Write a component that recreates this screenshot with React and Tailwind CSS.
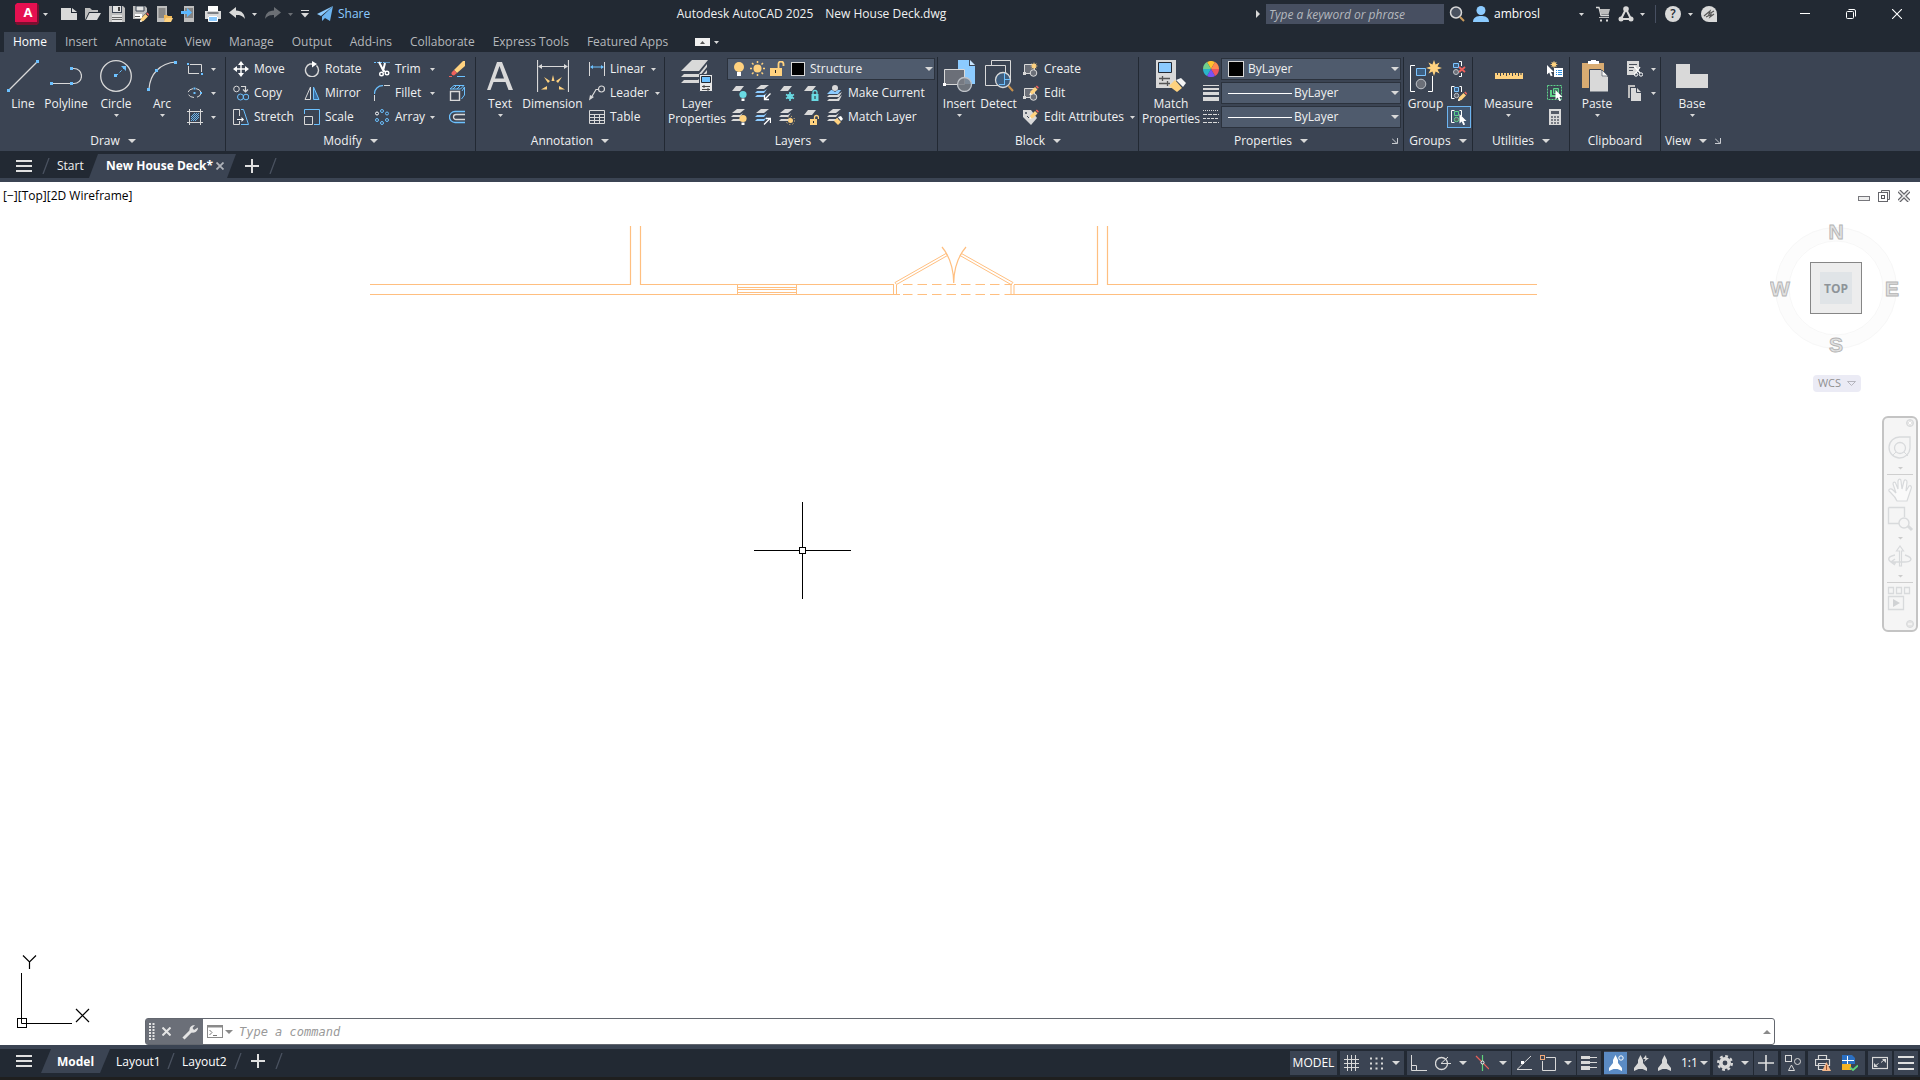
import clsx from "clsx";

function Icon({ w = 16, h = 16, children }) {
  return (
    <svg width={w} height={h} viewBox={`0 0 ${w} ${h}`} fill="none" className="shrink-0" aria-hidden="true">
      {children}
    </svg>
  );
}

function Caret({ big, className }) {
  return big ? (
    <svg width="8" height="4" viewBox="0 0 8 4" className={clsx("shrink-0", className)} aria-hidden="true">
      <path d="M0 0H8L4 4Z" fill="#d9d9d9" />
    </svg>
  ) : (
    <svg width="5" height="3" viewBox="0 0 5 3" className={clsx("shrink-0", className)} aria-hidden="true">
      <path d="M0 0H5L2.5 3Z" fill="#d9d9d9" />
    </svg>
  );
}

/* ---------- shared icon parts ---------- */

const Sheet = ({ y = 0, fill = "#d9d9d9" }) => <path d={`M5 ${y}H13L9 ${y + 5}H1Z`} fill={fill} />;

const Layers3 = ({ mid = "#d9d9d9" }) => (
  <>
    <path d="M6 0H14L9 4H1Z" fill="#d9d9d9" />
    <path d="M2 6H9L12 4L9 8H0Z" fill={mid} />
    <path d="M2 10H9L12 8L9 12H0Z" fill={mid} />
  </>
);

const Bulb = ({ fill }) => (
  <>
    <circle cx="12" cy="9.5" r="3.6" fill={fill} />
    <path d="M10.5 13.5h3V16h-3Z" fill="#fff" />
  </>
);

const Cursor = ({ x, y }) => (
  <path transform={`translate(${x} ${y})`} d="M0 0V9.5L2.2 7.6L3.8 11.2L5.6 10.4L4 7H7Z" fill="#fff" />
);

const Pencil = ({ x, y }) => (
  <g transform={`translate(${x} ${y})`}>
    <path d="M0 9L1 5.5L5.5 1L8 3.5L3.5 8Z" fill="#ffd27f" />
    <path d="M6.2 .6L7.4 -.4L9.4 1.6L8.4 2.8Z" fill="#f0625c" />
    <path d="M0 9L.6 6.8L2.2 8.4Z" fill="#fff" />
  </g>
);

const Star = ({ x, y, r = 1 }) => (
  <path
    transform={`translate(${x} ${y}) scale(${r})`}
    d="M0 -5L1 -2.2L3.5 -3.5L2.2 -1L5 0L2.2 1L3.5 3.5L1 2.2L0 5L-1 2.2L-3.5 3.5L-2.2 1L-5 0L-2.2 -1L-3.5 -3.5L-1 -2.2Z"
    fill="#ffd27f"
  />
);

const Blocks = () => (
  <>
    <path d="M1.5 12.5V3.5H11.5V12.5Z" fill="#6b6f78" stroke="#d9d9d9" />
    <circle cx="10.5" cy="12" r="3.3" fill="#6b6f78" stroke="#d9d9d9" />
    <path d="M0 11H3V14H0Z" fill="#d9d9d9" />
  </>
);

const Bracketed = ({ color = "#7cc4ff", circle = "#bfc3c9" }) => (
  <>
    <path d="M3.5 1.5H.5V13.5H3.5" stroke="#fff" />
    <path d="M3.5 2.5H7.5V6.5H3.5Z" fill="#3d5f82" stroke={color} />
    <circle cx="5.5" cy="10.5" r="2.2" fill="#5c616b" stroke={circle} />
    <path d="M8.5 1.5H10.5V7" stroke="#fff" />
  </>
);

/* ---------- quick access icons ---------- */

const quickAccess = [
  { name: "New", art: <><path d="M0 2H10V7H16V14H0Z" fill="#d9d9d9" /><path d="M11 2L16 6H11Z" fill="#d9d9d9" /></> },
  { name: "Open", art: <><path d="M0 14V2H5L7 4H13V6H4Z" fill="#bdbdbd" /><path d="M4.5 7H16L12 14H1Z" fill="#d9d9d9" /></> },
  { name: "Save", art: <><path d="M0 0H14L16 2V16H0Z" fill="#bdbdbd" /><path d="M3 0H13V7H3Z" fill="#3b4453" /><path d="M4 0H12V6H4Z" fill="#e4e4e4" /><path d="M9 1H11V5H9Z" fill="#444" /><path d="M3 9H13V16H3Z" fill="#e4e4e4" /><path d="M3 11.5H13M3 13.5H13" stroke="#666" /></> },
  { name: "Save As", art: <><path d="M0 0H12L14 2V6L8 12V13H0Z" fill="#bdbdbd" /><path d="M3 0H11V5H3Z" fill="#e4e4e4" stroke="#3b4453" /><path d="M2 8H9V12H2Z" fill="#fff" /><path d="M2 10.5H7" stroke="#555" /><Pencil x={7} y={7} /></> },
  { name: "Open from Web & Mobile", art: <><path d="M0 0H10V16H0Z" fill="#bdbdbd" /><path d="M1.5 2H8.5V12H1.5Z" fill="#888" /><path d="M7 15V9H10L11 10H15V12H9Z" fill="#f0b95a" /><path d="M9 12H16L14 16H7Z" fill="#ffd27f" /></> },
  { name: "Save to Web & Mobile", art: <><path d="M3 0H13V16H3Z" fill="#bdbdbd" /><path d="M4 2H12V12H4Z" fill="#858585" /><path d="M0 5H6V2L11 6.5L6 11V8H0Z" fill="#5cb8ff" /></> },
  { name: "Plot", art: <><path d="M3 0H13V5H3Z" fill="#fff" /><path d="M0 5H16V13H13V10H3V13H0Z" fill="#d9d9d9" /><path d="M2.5 7H13.5" stroke="#222933" /><path d="M3.5 10.5H12.5V15.5H3.5Z" fill="#8ccbff" stroke="#fff" /></> },
];

/* ---------- ribbon building blocks ---------- */

function Panel({ title, menu = true, launcher, className, children }) {
  return (
    <section className={clsx("flex h-[98px] shrink-0 flex-col border-r border-[#222933]", className)}>
      <div className="flex h-[73px]">{children}</div>
      <div className="relative flex h-[22px] items-center justify-center gap-2">
        <span>{title}</span>
        {menu && <Caret big />}
        {launcher && (
          <button className={clsx(launcher === "corner" && "absolute right-px p-1")} aria-label={`${title} settings`}>
            <Icon w={6} h={6}><path d="M0 .5L4.5 5M5.5 0V5.5H0" stroke="#c9ccd1" /></Icon>
          </button>
        )}
      </div>
    </section>
  );
}

function BigButton({ label, caret, className, children }) {
  return (
    <button className={clsx("flex shrink-0 flex-col items-center pt-[3px] leading-[15px] whitespace-nowrap", className)}>
      {children}
      <span className="mt-1 whitespace-pre text-center">{label}</span>
      {caret && <Caret className="mt-[3px]" />}
    </button>
  );
}

function SmallButton({ label, name, caret, className, children }) {
  return (
    <button aria-label={label || name} className={clsx("flex h-6 items-center gap-[5px] whitespace-nowrap", className)}>
      {children}
      {label && <span>{label}</span>}
      {caret && <Caret className={label ? "ml-px" : "ml-[3px]"} />}
    </button>
  );
}

function Combo({ label, value, className, children }) {
  return (
    <div className={clsx("flex h-[22px] items-center border border-[#2b323d] bg-[#4f5b6d] pr-px", className)}>
      {children}
      <select aria-label={label} className="min-w-0 flex-1 appearance-none bg-transparent outline-none">
        <option>{value}</option>
      </select>
      <Caret big />
    </div>
  );
}

/* ---------- ribbon panels ---------- */

function DrawPanel() {
  return (
    <Panel title="Draw" className="w-[225px]">
      <BigButton label="Line" className="w-11">
        <Icon w={32} h={32}><path d="M2 30L30 2" stroke="#d9d9d9" strokeWidth="1.2" /><path d="M0 29h3v3H0zM29 0h3v3h-3z" fill="#6cc1ff" /></Icon>
      </BigButton>
      <BigButton label="Polyline" className="w-[42px]">
        <Icon w={32} h={32}><path d="M2 23.500H21M22 8.500h2a7.500 7.500 0 0 1 0 15h-2" stroke="#d9d9d9" strokeWidth="1.2" /><path d="M0 22h3v3H0zM20 22h3v3h-3zM20 7h3v3h-3z" fill="#6cc1ff" /></Icon>
      </BigButton>
      <BigButton label="Circle" caret className="w-[58px]">
        <Icon w={32} h={32}><circle cx="16" cy="16" r="15.300" stroke="#d9d9d9" strokeWidth="1.300" /><path d="M16 16L24 8" stroke="#6cc1ff" strokeDasharray="3 2" /><path d="M26 6V11L21 6ZM14 14h3v3h-3z" fill="#6cc1ff" /></Icon>
      </BigButton>
      <BigButton label="Arc" caret className="w-[34px]">
        <Icon w={32} h={32}><path d="M3 29C4 14 14 3 30 2" stroke="#d9d9d9" strokeWidth="1.200" /><path d="M1 28h3v3H1zM9 9h3v3H9zM28 1h3v3h-3z" fill="#6cc1ff" /></Icon>
      </BigButton>
      <div className="pl-2">
        <SmallButton name="Rectangle" caret>
          <Icon><path d="M3 3.500H14.500V11M1.500 5V12.500H12" stroke="#d9d9d9" /><path d="M0 2h2v2H0zM14 12h2v2h-2z" fill="#6cc1ff" /></Icon>
        </SmallButton>
        <SmallButton name="Ellipse" caret>
          <Icon><ellipse cx="7.500" cy="8" rx="6.500" ry="4.500" stroke="#d9d9d9" strokeDasharray="6 3" /><path d="M6.500 2.500h2v2h-2zM6.500 7h2v2h-2zM13 7h2v2h-2z" fill="#6cc1ff" /></Icon>
        </SmallButton>
        <SmallButton name="Hatch" caret>
          <Icon><path d="M0 2.500H16M0 13.500H16M2.500 0V16M13.500 0V16" stroke="#d9d9d9" /><path d="M4 8L8 4M4 12L12 4M8 12L12 8M4 10L10 4M6 12L12 6" stroke="#6cc1ff" strokeWidth=".900" /></Icon>
        </SmallButton>
      </div>
    </Panel>
  );
}

function ModifyPanel() {
  return (
    <Panel title="Modify" className="w-[250px]">
      <div className="grid grid-cols-[71px_70px_75px_16px] grid-rows-[24px_24px_24px] pl-[7px]">
        <SmallButton label="Move">
          <Icon><path d="M8 2V14M2 8H14" stroke="#fff" strokeWidth="1.400" /><path d="M8 0L11 4H5ZM8 16L5 12H11ZM0 8L4 5V11ZM16 8L12 11V5Z" fill="#fff" /></Icon>
        </SmallButton>
        <SmallButton label="Rotate">
          <Icon><path d="M12.500 4.500A6.500 6.500 0 1 1 6 3H9" stroke="#d9d9d9" strokeWidth="1.400" /><path d="M8 0L13 3L8 6.500Z" fill="#fff" /></Icon>
        </SmallButton>
        <SmallButton label="Trim" caret className="pr-[14px] [&>svg:last-child]:ml-auto">
          <Icon><path d="M0 1.500H10" stroke="#6cc1ff" strokeDasharray="2 1" /><path d="M10 1.500H16" stroke="#6cc1ff" strokeOpacity=".6" /><path d="M5 1L10 11M11 2L9 10" stroke="#fff" strokeWidth="2" /><circle cx="7.500" cy="13" r="1.800" stroke="#fff" strokeWidth="1.400" /><circle cx="13" cy="12" r="1.800" stroke="#fff" strokeWidth="1.400" /><path d="M9 9L12 11" stroke="#fff" strokeWidth="1.500" /></Icon>
        </SmallButton>
        <SmallButton name="Erase">
          <Icon><path d="M14 0H16V5L8 12L5 9Z" fill="#ffd27f" /><path d="M5 9L8 12L5 14.500C2 14 2 12 3 11Z" fill="#f0625c" /><path d="M0 15.500H3" stroke="#f0625c" /><path d="M8 15.500H16" stroke="#6cc1ff" /></Icon>
        </SmallButton>
        <SmallButton label="Copy">
          <Icon><circle cx="3.500" cy="4" r="2.800" stroke="#d9d9d9" /><path d="M8 1.500H12.500V6M10 4.500L12.500 7L15 4.500" stroke="#d9d9d9" strokeWidth="1.200" /><circle cx="7.500" cy="12" r="3" stroke="#6cc1ff" /><circle cx="13" cy="12" r="2.800" stroke="#6cc1ff" /></Icon>
        </SmallButton>
        <SmallButton label="Mirror">
          <Icon><path d="M6.500 2V14.500H1Z" stroke="#d9d9d9" /><path d="M9.500 2V14.500H15Z" fill="#3b6da0" stroke="#6cc1ff" /></Icon>
        </SmallButton>
        <SmallButton label="Fillet" caret className="pr-[14px] [&>svg:last-child]:ml-auto">
          <Icon><path d="M.500 9A8 8 0 0 1 9 .700" stroke="#6cc1ff" strokeWidth="1.200" /><path d="M10 .500H16M.500 10V16" stroke="#d9d9d9" /></Icon>
        </SmallButton>
        <SmallButton name="Explode">
          <Icon><path d="M1.500 6.500H10.500V15.500H1.500Z" stroke="#d9d9d9" strokeWidth="1.400" /><path d="M1 4L5 .500H15L11.500 4H1M13 6L15.500 2V10L12.500 14" stroke="#6cc1ff" /><path d="M4 4L7 1M8 4L11 1" stroke="#6cc1ff" /></Icon>
        </SmallButton>
        <SmallButton label="Stretch">
          <Icon><path d="M6.500 7V.500H.500V15.500H6.500V12" stroke="#d9d9d9" /><path d="M4 10.500H10" stroke="#fff" /><path d="M8.500 8L11 10.500L8.500 13Z" fill="#fff" /><path d="M8 .500H10.500L15.500 15.500H8" stroke="#6cc1ff" /></Icon>
        </SmallButton>
        <SmallButton label="Scale">
          <Icon><path d="M.500 5V.500H15.500V15.500H10" stroke="#6cc1ff" /><path d="M.500 7.500H8.500V15.500H.500Z" stroke="#d9d9d9" /></Icon>
        </SmallButton>
        <SmallButton label="Array" caret className="pr-[14px] [&>svg:last-child]:ml-auto">
          <Icon><g stroke="#6cc1ff"><circle cx="8" cy="2" r="1.500" /><circle cx="13" cy="4.500" r="1.500" /><circle cx="13" cy="11" r="1.500" /><circle cx="8" cy="14" r="1.500" /><circle cx="3" cy="11" r="1.500" /></g><circle cx="3" cy="4.500" r="1.500" stroke="#fff" /></Icon>
        </SmallButton>
        <SmallButton name="Offset">
          <Icon><path d="M16 2.500H6A5.500 5.500 0 0 0 6 13.500H16" stroke="#6cc1ff" strokeWidth="1.300" /><path d="M16 5.500H7A2.500 2.500 0 0 0 7 10.500H16" stroke="#d9d9d9" strokeWidth="1.300" /></Icon>
        </SmallButton>
      </div>
    </Panel>
  );
}

function AnnotationPanel() {
  return (
    <Panel title="Annotation" className="w-[189px]">
      <BigButton label="Text" caret className="w-12">
        <Icon w={32} h={32}><path d="M13 2H18L29 30H24.500L21.500 22H9.500L6.500 30H3L13 2ZM15.500 6L11 18.500H20Z" fill="#d9d9d9" /></Icon>
      </BigButton>
      <BigButton label="Dimension" className="w-[57px]">
        <Icon w={32} h={32}><path d="M.500 0V32M31.500 0V32M3 6.500H29" stroke="#d9d9d9" strokeWidth="1.200" /><path d="M1 6.500L5 4V9ZM31 6.500L27 4V9Z" fill="#d9d9d9" /><path d="M14.500 21L16 15L17.500 21ZM7 17L13 21L11 23ZM25 17L19 21L21 23ZM4 29.500L10 26V29.500ZM28 29.500L22 26V29.500Z" fill="#ffd27f" /></Icon>
      </BigButton>
      <div className="pl-2">
        <SmallButton label="Linear" caret>
          <Icon><path d="M.500 1V15M15.500 1V15" stroke="#d9d9d9" /><path d="M2 6H14" stroke="#6cc1ff" /><path d="M1 6L4 4V8ZM15 6L12 4V8Z" fill="#6cc1ff" /></Icon>
        </SmallButton>
        <SmallButton label="Leader" caret>
          <Icon><circle cx="12.500" cy="4" r="3" stroke="#d9d9d9" strokeWidth="1.200" /><path d="M9 4.500H7L2 13" stroke="#d9d9d9" strokeWidth="1.200" /><path d="M0 15.500L1 10L5 12Z" fill="#d9d9d9" /></Icon>
        </SmallButton>
        <SmallButton label="Table">
          <Icon><path d="M.500 1.500H15.500V14.500H.500ZM.500 5.500H15.500M.500 8.500H15.500M.500 11.500H15.500M5.500 5V15M10.500 5V15" stroke="#d9d9d9" /></Icon>
        </SmallButton>
      </div>
    </Panel>
  );
}

const layerTools = [
  { name: "Layer off", art: <><Sheet y={1} /><Bulb fill="#6adbe4" /></> },
  { name: "Isolate", art: <><Layers3 mid="#8ccbff" /><path d="M15.500 8.500L10 14M9.500 10V14.500H14" stroke="#fff" strokeWidth="1.300" /></> },
  { name: "Freeze", art: <><Sheet y={1} /><path d="M11 7V16M7 9.500L15 13.500M15 9.500L7 13.500" stroke="#6adbe4" strokeWidth="1.600" /><circle cx="11" cy="11.500" r="2.500" stroke="#6adbe4" /></> },
  { name: "Lock", art: <><Sheet y={1} /><path d="M8.500 9H15.500V16H8.500Z" fill="#6adbe4" /><path d="M10 9V7.500a2 2 0 0 1 4 0V9" stroke="#6adbe4" strokeWidth="1.300" /><path d="M12 11V14" stroke="#222933" /></> },
  { name: "Turn all layers on", art: <><Layers3 /><Bulb fill="#ffd27f" /></> },
  { name: "Unisolate", art: <><Layers3 mid="#8ccbff" /><path d="M9 15.500L15 9.500M11 9.500H15.500V14" stroke="#fff" strokeWidth="1.300" /></> },
  { name: "Thaw all layers", art: <><Layers3 /><circle cx="11.500" cy="11.500" r="2.500" fill="#ffd27f" /><circle cx="11.500" cy="11.500" r="4.200" stroke="#ffd27f" strokeDasharray="1 2.300" /></> },
  { name: "Unlock", art: <><Sheet y={1} /><path d="M7 10H14V16H7Z" fill="#ffd27f" /><path d="M11.500 10V8.500a2 2 0 0 1 4 0V10" stroke="#ffd27f" strokeWidth="1.300" /><path d="M10.500 12V14" stroke="#222933" /></> },
];

function LayersPanel() {
  return (
    <Panel title="Layers" className="w-[273px]">
      <BigButton label={"Layer\nProperties"} className="w-[62px] pl-[2px]">
        <Icon w={32} h={32}>
          <path d="M11 0H27L18 11H0Z" fill="#d9d9d9" />
          <path d="M3 14H18L26 4V7L18 17H0ZM3 20H17L26 10V13L18 23H0Z" fill="#d9d9d9" />
          <path d="M18.500 14.500H31.500V31.500H18.500Z" fill="#e8e8e8" stroke="#3b4453" />
          <path d="M20.500 16.500H29.500V22.500H20.500Z" fill="#6cc1ff" stroke="#222933" />
          <path d="M21 26.500H29M21 29.500H29M23 25V28M27 28V31" stroke="#444" />
        </Icon>
      </BigButton>
      <div className="flex flex-col">
        <Combo label="Layer" value="Structure" className="mt-px w-[208px] pl-[5px]">
          <div className="flex w-[63px] shrink-0 items-center justify-between">
            <Icon w={53} h={16}>
              <circle cx="6" cy="6" r="5" fill="#ffd27f" /><path d="M4 11H8V15H4Z" fill="#fff" />
              <circle cx="24.500" cy="7.500" r="4" fill="#ffd27f" />
              <path d="M24.500 0V2M24.500 13V15M17 7.500H19M30 7.500H32M19 2L20.500 3.500M30 2L28.500 3.500M19 13L20.500 11.500M30 13L28.500 11.500" stroke="#ffd27f" strokeWidth="1.500" />
              <path d="M37 7H49V15H37Z" fill="#ffd27f" /><path d="M45.500 7V3a2.500 2.500 0 0 1 5 0V5" stroke="#ffd27f" strokeWidth="1.800" /><path d="M42.500 9V12" stroke="#222" />
            </Icon>
          </div>
          <span className="-ml-[5px] mr-[5px] h-[14px] w-[14px] shrink-0 border border-[#d9d9d9] bg-black" />
        </Combo>
        <div className="flex pl-1 pt-px">
          <div className="grid grid-cols-4 grid-rows-[24px_24px] gap-x-2">
            {layerTools.map((t) => (
              <SmallButton key={t.name} name={t.name}><Icon>{t.art}</Icon></SmallButton>
            ))}
          </div>
          <div className="pl-2">
            <SmallButton label="Make Current">
              <Icon><circle cx="8" cy="3" r="3" fill="#d9d9d9" /><path d="M4 5H5L8 7L11 5H14L11 9H0Z" fill="#8ccbff" /><path d="M2 10H10L15 7L12 12H0ZM2 14H10L15 10L12 16H0Z" fill="#d9d9d9" /></Icon>
            </SmallButton>
            <SmallButton label="Match Layer">
              <Icon><Layers3 /><path d="M7 12L10 9L14 13L11 16Z" fill="#ffd27f" /><path d="M11 8L14 7L16 10L14 12Z" fill="#fff" /></Icon>
            </SmallButton>
          </div>
        </div>
      </div>
    </Panel>
  );
}

function BlockPanel() {
  return (
    <Panel title="Block" className="w-[201px]">
      <BigButton label="Insert" caret className="w-[42px]">
        <Icon w={32} h={32}>
          <path d="M15 0H26V6H32V24H15Z" fill="#8ccbff" /><path d="M27 0L32 5H27Z" fill="#c9e6ff" />
          <path d="M1.500 9.500H21.500V24.500H1.500Z" fill="#6b6f78" stroke="#d9d9d9" />
          <circle cx="21.500" cy="24.500" r="7" fill="#787c84" fillOpacity=".85" stroke="#bfc3c9" strokeWidth="1.300" />
          <path d="M0 23H3V26H0Z" fill="#fff" />
        </Icon>
      </BigButton>
      <BigButton label="Detect" className="w-[37px]">
        <Icon w={32} h={32}>
          <path d="M8.500 5V.500H27.500V22M2.500 5.500H22.500V25.500H2.500Z" stroke="#d9d9d9" />
          <circle cx="20" cy="20" r="7.500" fill="#3e5d7e" stroke="#d9d9d9" strokeWidth="1.300" />
          <path d="M21.500 13V25M21.500 19.500H27M16 24.500H22" stroke="#6cc1ff" />
          <path d="M25.500 26L30 31" stroke="#c9914a" strokeWidth="2" />
        </Icon>
      </BigButton>
      <div className="pl-[6px]">
        <SmallButton label="Create"><Icon><Blocks /><Star x={11} y={5} r={0.8} /></Icon></SmallButton>
        <SmallButton label="Edit"><Icon><Blocks /><Pencil x={6.500} y={1} /></Icon></SmallButton>
        <SmallButton label="Edit Attributes" caret>
          <Icon><path d="M0 1H8L14 9L8 16L0 8Z" fill="#d9d9d9" /><circle cx="3" cy="4" r="1" fill="#3b4453" /><path d="M4 7L6 9" stroke="#3b4453" /><Pencil x={6.500} y={1} /></Icon>
        </SmallButton>
      </div>
    </Panel>
  );
}

const wheel = [
  ["M8 8L4 1.070A8 8 0 0 1 12 1.070Z", "#ffc22e"],
  ["M8 8L12 1.070A8 8 0 0 1 16 8Z", "#ff8a4f"],
  ["M8 8L16 8A8 8 0 0 1 12 14.930Z", "#f0555f"],
  ["M8 8L12 14.930A8 8 0 0 1 4 14.930Z", "#7a52f5"],
  ["M8 8L4 14.930A8 8 0 0 1 0 8Z", "#2ab5c9"],
  ["M8 8L0 8A8 8 0 0 1 4 1.070Z", "#6fd08c"],
];

function PropertiesPanel() {
  return (
    <Panel title="Properties" launcher="corner" className="w-[265px]">
      <BigButton label={"Match\nProperties"} className="w-[64px]">
        <Icon w={32} h={32}>
          <path d="M1 0H21V28H1Z" fill="#d9d9d9" /><path d="M3.500 2.500H16.500V12.500H3.500Z" fill="#8ccbff" stroke="#222933" />
          <path d="M4 18.500H15M4 23.500H15M7.500 16V21M12.500 21V26" stroke="#555" strokeWidth="1.300" />
          <path d="M14 26L20 20L27 28L22 32Z" fill="#ffd27f" /><path d="M21 20L26 18L31 23L28 27Z" fill="#f4f4f4" />
        </Icon>
      </BigButton>
      <div className="grid grid-cols-[18px_180px] grid-rows-[24px_24px_24px] items-center">
        <Icon>{wheel.map(([d, fill]) => <path key={fill} d={d} fill={fill} />)}</Icon>
        <Combo label="Object color" value="ByLayer" className="pl-[6px]">
          <span className="mr-1 h-4 w-4 border border-[#d9d9d9] bg-black" />
        </Combo>
        <Icon><path d="M0 0H16V1H0ZM0 3H16V5H0ZM0 7H16V10H0ZM0 12H16V16H0Z" fill="#d9d9d9" /></Icon>
        <Combo label="Lineweight" value="ByLayer" className="pl-[6px]">
          <span className="mr-[2px] h-px w-16 bg-white" />
        </Combo>
        <Icon><path d="M0 1.500H16" stroke="#d9d9d9" strokeDasharray="1 1" /><path d="M0 5.500H16M0 13.500H16" stroke="#d9d9d9" strokeDasharray="4 1" /><path d="M0 9.500H16" stroke="#d9d9d9" strokeDasharray="3 1" /></Icon>
        <Combo label="Linetype" value="ByLayer" className="pl-[6px]">
          <span className="mr-[2px] h-px w-16 bg-white" />
        </Combo>
      </div>
    </Panel>
  );
}

function GroupsPanel() {
  return (
    <Panel title="Groups" className="w-[69px]">
      <BigButton label="Group" className="w-[43px]">
        <Icon w={32} h={32}>
          <path d="M5 5.500H.500V31.500H5M18 31.500H22.500V16" stroke="#fff" />
          <path d="M6.500 8.500H15.500V15.500H6.500Z" fill="#3d5f82" stroke="#7cc4ff" /><circle cx="11" cy="24" r="4.800" fill="#6b6f78" stroke="#bfc3c9" />
          <Star x={24} y={8} r={1.6} />
        </Icon>
      </BigButton>
      <div>
        <SmallButton name="Ungroup" className="w-6 justify-center">
          <Icon><path d="M2.500 2.500H7.500V6.500H2.500Z" fill="#3d5f82" stroke="#7cc4ff" /><circle cx="5" cy="11" r="2.500" fill="#6b6f78" stroke="#bfc3c9" /><path d="M8 .500H10.500V5M10.500 12V15.500H8" stroke="#fff" /><path d="M8 6L14 11M14 6L8 11" stroke="#f0625c" strokeWidth="1.800" /></Icon>
        </SmallButton>
        <SmallButton name="Group edit" className="w-6 justify-center">
          <Icon><Bracketed /><Pencil x={7} y={7} /></Icon>
        </SmallButton>
        <button aria-label="Group selection" aria-pressed="true" className="mt-px flex h-[22px] w-6 items-center justify-center border border-[#6cb4f0] bg-[#42566f]">
          <Icon><Bracketed color="#5fd28a" circle="#5fd28a" /><Cursor x={8.500} y={5} /></Icon>
        </button>
      </div>
    </Panel>
  );
}

function UtilitiesPanel() {
  return (
    <Panel title="Utilities" className="w-[97px]">
      <BigButton label="Measure" caret className="w-[71px]">
        <Icon w={28} h={32}><path d="M0 13H28V19H0Z" fill="#ffd27f" /><path d="M2.500 13V15M5.500 13V16M8.500 13V15M11.500 13V16M14.500 13V15M17.500 13V16M20.500 13V15M23.500 13V16M26 13V15" stroke="#3b4453" /></Icon>
      </BigButton>
      <div className="pl-[3px]">
        <SmallButton name="Quick Select">
          <Icon><Cursor x={0} y={4} /><Star x={7} y={3.500} r={0.8} /><path d="M7 7H16V16H7Z" fill="#fff" /><path d="M9 9.500H10M11 9.500H15M9 11.500H10M11 11.500H15M9 13.500H10M11 13.500H15" stroke="#2c8ede" /></Icon>
        </SmallButton>
        <SmallButton name="Select All">
          <Icon><path d="M.500 .500H14.500V14.500H.500Z" stroke="#5fd28a" strokeDasharray="2 1" /><path d="M3 5H5V10H9V12H3Z" fill="#5fd28a" /><path d="M6.500 3.500H11.500V8.500H6.500Z" fill="#3c7a62" stroke="#5fd28a" /><Cursor x={8.500} y={5} /></Icon>
        </SmallButton>
        <SmallButton name="Quick Calculator">
          <Icon><path d="M2 0H14V16H2Z" fill="#d9d9d9" /><path d="M4 2H12V5H4Z" fill="#555b66" /><path d="M4 8H12M4 11H12M4 14H12" stroke="#555b66" strokeWidth="1.600" strokeDasharray="2 1" /></Icon>
        </SmallButton>
      </div>
    </Panel>
  );
}

function ClipboardPanel() {
  return (
    <Panel title="Clipboard" menu={false} className="w-[91px]">
      <BigButton label="Paste" caret className="w-[54px]">
        <Icon w={32} h={32}>
          <path d="M1 3H23V28H1Z" fill="#d9ac72" /><path d="M7 1H10V0H15V1H18V4H7Z" fill="#fff" />
          <path d="M8.500 9.500H20L27.500 17V32H8.500Z" fill="#d9d9d9" stroke="#3b4453" /><path d="M21 10L27 16H21Z" fill="#f6f6f6" stroke="#3b4453" strokeWidth=".600" />
        </Icon>
      </BigButton>
      <div className="pl-[3px]">
        <SmallButton name="Cut" caret>
          <Icon><path d="M0 0H12V7L8 14H0Z" fill="#d9d9d9" /><path d="M2 3.500H10M2 6.500H7M2 9.500H6" stroke="#4a505b" /><path d="M7 5L13 12M13 6L9 12" stroke="#fff" strokeWidth="1.300" /><circle cx="9" cy="13.500" r="1.700" stroke="#fff" /><circle cx="14" cy="13.500" r="1.700" stroke="#fff" /></Icon>
        </SmallButton>
        <SmallButton name="Copy clip" caret>
          <Icon><path d="M1 0H8V2H3V13H1Z" fill="#bdbdbd" /><path d="M4 3H10L14 7V16H4Z" fill="#d9d9d9" /><path d="M9.500 3V7.500H14" stroke="#3b4453" /></Icon>
        </SmallButton>
      </div>
    </Panel>
  );
}

function Ribbon() {
  return (
    <div className="flex h-[99px] overflow-hidden bg-[#3b4453] pl-px pt-[5px] text-[#f0f1f2]">
      <DrawPanel />
      <ModifyPanel />
      <AnnotationPanel />
      <LayersPanel />
      <BlockPanel />
      <PropertiesPanel />
      <GroupsPanel />
      <UtilitiesPanel />
      <ClipboardPanel />
      <Panel title="View" launcher="inline" className="w-[64px] border-r-0">
        <BigButton label="Base" caret className="w-[62px]">
          <Icon w={32} h={32}><path d="M0 4H14V14H32V28H0Z" fill="#d9d9d9" /></Icon>
        </BigButton>
      </Panel>
    </div>
  );
}

/* ---------- top bars ---------- */

function TitleBar() {
  return (
    <header className="flex h-7 items-center">
      <div className="flex h-full w-[367px] shrink-0 items-center pl-[15px]">
        <button aria-label="Application menu" className="flex items-center gap-1">
          <Icon w={24} h={22}>
            <path d="M2 0H22L24 2V20L22 22H2L0 20L3 17Z" fill="#7a1030" />
            <path d="M2 0H22V19H0V2Z" fill="#e51050" />
            <text x="13" y="14" textAnchor="middle" fontSize="13" fontWeight="700" fill="#fff" fontFamily="Open Sans, sans-serif">A</text>
          </Icon>
          <Caret />
        </button>
        <div className="ml-[13px] flex gap-2">
          {quickAccess.map((q) => (
            <button key={q.name} aria-label={q.name}><Icon>{q.art}</Icon></button>
          ))}
          <button aria-label="Undo" className="flex items-center gap-[7px]">
            <Icon><path d="M0 6.500L7 1V4.500C13 4.500 15.500 8 16 13C13.500 9.500 11 9 7 9V12Z" fill="#d9d9d9" /></Icon>
            <Caret />
          </button>
          <button aria-label="Redo" className="flex items-center gap-[7px] opacity-40">
            <Icon><path d="M16 6.500L9 1V4.500C3 4.500 .500 8 0 13C2.500 9.500 5 9 9 9V12Z" fill="#d9d9d9" /></Icon>
            <Caret />
          </button>
          <button aria-label="Customize Quick Access Toolbar">
            <Icon w={8} h={8}><path d="M0 .500H8" stroke="#d9d9d9" /><path d="M0 3H8L4 7.500Z" fill="#d9d9d9" /></Icon>
          </button>
        </div>
        <a href="#share" className="ml-2 flex items-center gap-[5px] text-[#8ccbff]">
          <Icon><path d="M16 0L0 8L4 10Z" fill="#8ccbff" /><path d="M16 0L5 10.500V15L8 12L13 15Z" fill="#6cb4f0" /></Icon>
          Share
        </a>
      </div>
      <h1 className="flex flex-1 justify-center gap-3 whitespace-nowrap text-[#f0f1f2]">
        <span>Autodesk AutoCAD 2025</span>
        <span>New House Deck.dwg</span>
      </h1>
      <div className="flex h-full w-[664px] shrink-0 items-center">
        <Icon w={5} h={8}><path d="M0 0L4 4L0 8Z" fill="#d9d9d9" /></Icon>
        <input aria-label="Search" placeholder="Type a keyword or phrase" className="ml-[5px] h-5 w-[178px] bg-[#474f61] px-[3px] italic outline-none placeholder:text-[#b4b8be]" />
        <button aria-label="Find" className="ml-[5px]">
          <Icon><circle cx="7" cy="6.500" r="5.500" fill="#4a5260" stroke="#d9d9d9" strokeWidth="1.500" /><path d="M11 11L15 15" stroke="#c99a5b" strokeWidth="2" /></Icon>
        </button>
        <button className="ml-2 flex w-[111px] items-center gap-[5px]">
          <Icon><circle cx="8" cy="4.500" r="4.500" fill="#8ccbff" /><path d="M0 16C0 11 4 10 8 10S16 11 16 16Z" fill="#8ccbff" /></Icon>
          <span>ambrosl</span>
          <Caret className="ml-auto" />
        </button>
        <button aria-label="Autodesk App Store" className="ml-3">
          <Icon><path d="M0 1.500H3L5 9.500H13" stroke="#d9d9d9" strokeWidth="1.300" /><path d="M3.500 3H14L12.500 8.500H5ZM3 11H13V12H3Z" fill="#bdbdbd" /><path d="M4 13.500h2v2H4zM10 13.500h2v2h-2z" fill="#d9d9d9" /></Icon>
        </button>
        <button aria-label="Stay connected" className="ml-[5px] flex items-center gap-[5px]">
          <Icon w={18}><path d="M4 13L9 3L14 13H4" stroke="#d9d9d9" strokeWidth="2" /><circle cx="9" cy="3" r="2.800" fill="#d9d9d9" /><circle cx="4" cy="13" r="2.500" fill="#d9d9d9" /><circle cx="14" cy="13" r="2.500" fill="#d9d9d9" /></Icon>
          <Caret />
        </button>
        <span className="ml-[10px] h-[18px] w-px bg-[#474f61]" />
        <button aria-label="Help" className="ml-[9px] flex items-center gap-[7px]">
          <span className="flex h-4 w-4 items-center justify-center rounded-full bg-[#d9d9d9] font-semibold text-[#222933]">?</span>
          <Caret />
        </button>
        <button aria-label="Assistant" className="ml-2">
          <Icon><path d="M16 16H8A8 8 0 1 1 16 8Z" fill="#d9d9d9" /><path d="M3 10L9 5L8 8L13 5M5 11L10 8.500L9 11L13 8" stroke="#555" strokeWidth="1.200" /></Icon>
        </button>
        <div className="ml-auto flex h-full">
          <button aria-label="Minimize" className="flex w-[46px] items-center justify-center"><Icon w={10} h={10}><path d="M0 4.500H10" stroke="#fff" /></Icon></button>
          <button aria-label="Restore" className="flex w-[46px] items-center justify-center"><Icon w={10} h={10}><rect x=".500" y="2.500" width="7" height="7" rx="1" stroke="#fff" /><path d="M2.500 .500H8A1.500 1.500 0 0 1 9.500 2V7.500" stroke="#fff" /></Icon></button>
          <button aria-label="Close" className="flex w-[46px] items-center justify-center"><Icon w={10} h={10}><path d="M0 0L10 10M10 0L0 10" stroke="#fff" strokeWidth="1.100" /></Icon></button>
        </div>
      </div>
    </header>
  );
}

const tabs = ["Home", "Insert", "Annotate", "View", "Manage", "Output", "Add-ins", "Collaborate", "Express Tools", "Featured Apps"];

function RibbonTabs() {
  return (
    <nav className="mt-1 flex h-5 items-center pl-1">
      {tabs.map((tab, i) => (
        <button key={tab} className={clsx("h-full whitespace-nowrap px-[9px]", i === 0 ? "bg-[#3b4453] text-white" : "text-[#b5b8bc]")}>
          {tab}
        </button>
      ))}
      <button aria-label="Minimize ribbon" className="ml-[18px] flex h-2 w-[15px] items-center justify-center bg-[#f0f0f0]">
        <Icon w={5} h={3}><path d="M0 3H5L2.500 0Z" fill="#555" /></Icon>
      </button>
      <Caret className="ml-1" />
    </nav>
  );
}

const Slash = () => <Icon w={8} h={16}><path d="M1 16L7 0" stroke="#4a5260" strokeWidth="1.300" /></Icon>;
const Plus = () => <Icon w={14} h={14}><path d="M0 7H14M7 0V14" stroke="#e0e0e0" strokeWidth="2" /></Icon>;
const Burger = () => <Icon w={16} h={12}><path d="M0 1H16M0 6H16M0 11H16" stroke="#e0e0e0" strokeWidth="2" /></Icon>;

function FileTabs() {
  return (
    <div className="flex h-[27px] items-center pl-4 pt-[3px] text-white">
      <button aria-label="File tab menu"><Burger /></button>
      <span className="ml-[10px]"><Slash /></span>
      <button className="ml-[7px] w-[26px] text-[#f0f1f2]">Start</button>
      <div className="ml-[6px] flex h-6 w-[147px] items-center bg-[#3b4453] pl-[17px] [clip-path:polygon(9px_0,100%_0,calc(100%_-_9px)_100%,0_100%)]">
        <button className="w-[102px] text-left font-bold whitespace-nowrap">New House Deck*</button>
        <button aria-label="Close tab" className="ml-2"><Icon w={8} h={8}><path d="M.500 .500L7.500 7.500M7.500 .500L.500 7.500" stroke="#b0b4ba" strokeWidth="1.800" /></Icon></button>
      </div>
      <button aria-label="New tab" className="ml-[9px]"><Plus /></button>
      <span className="ml-[10px]"><Slash /></span>
    </div>
  );
}

/* ---------- drawing area ---------- */

function FloorPlan() {
  return (
    <svg width="1168" height="70" viewBox="0 0 1168 70" fill="none" stroke="#ffbf80" className="absolute left-[370px] top-11" aria-label="Floor plan" role="img">
      <path d="M0 58.500H260.500V0M270.500 0V58.500H524M0 68.500H530M642 68.500H1167M644 58.500H727.500V0M737.500 0V58.500H1167" strokeWidth="1.200" />
      <path d="M367.500 58V69M426.500 58V69M367 61.500H426M367 63.500H426M367 66.500H426" />
      <path d="M523.500 59V69M526.500 59V69M641 59V69M644 59V69" />
      <path d="M533 58.500H642M533 68.500H642" strokeWidth="1.200" strokeDasharray="9.500 5" />
      <path d="M525 56.500L576 27.500L577.500 29.500L526.500 58.500ZM643 56.500L591.500 27.500L590 29.500L641 58.500Z" />
      <path d="M572 21Q583.500 35 583.700 57M596 21Q584 35 583.700 57" strokeWidth="1.200" />
    </svg>
  );
}

function Compass() {
  return (
    <svg width="134" height="138" viewBox="0 0 134 138" fill="none" className="absolute right-[16px] top-10" role="img" aria-label="ViewCube">
      <circle cx="66" cy="66" r="54" stroke="#fcfcfc" strokeWidth="13" />
      <circle cx="66" cy="66" r="60.500" stroke="#f7f7f7" />
      <circle cx="66" cy="66" r="47" stroke="#f7f7f7" />
      <rect x="40.500" y="40.500" width="51" height="51" fill="#ededed" stroke="#868686" />
      <rect x="50" y="50" width="32" height="32" fill="#e0e4e7" />
      <g fontFamily="Liberation Sans, sans-serif" fontWeight="700" textAnchor="middle">
        <text x="66" y="71" fontSize="12" fill="#8e9499" fontFamily="Open Sans, sans-serif">TOP</text>
        <g fontSize="21" fill="#e2e2e2" stroke="#b4b4b4" strokeWidth=".900">
          <text x="66" y="17">N</text>
          <text x="66" y="130">S</text>
          <text x="10" y="74">W</text>
          <text x="122" y="74">E</text>
        </g>
      </g>
    </svg>
  );
}

function NavBar() {
  return (
    <div className="absolute right-[2px] top-[234px] rounded-md border-2 border-[#c4c4c4] bg-[#f5f5f5]">
      <svg width="32" height="212" viewBox="0 0 32 212" fill="none" stroke="#d8dadc" role="img" aria-label="Navigation bar">
        <circle cx="26" cy="5" r="3.500" fill="#e4e4e4" /><path d="M24.500 3.500L27.500 6.500M27.500 3.500L24.500 6.500" stroke="#fff" />
        <path d="M16 19H26V30A10.500 10.500 0 1 1 16 19Z" strokeWidth="1.300" /><circle cx="16" cy="30" r="5.500" strokeWidth="1.300" /><path d="M8 38L12 34M24 38L20 34" />
        <path d="M14 49H19L16.500 51.500Z" fill="#ccc" stroke="none" />
        <path d="M3 56.500H29" stroke="#cfcfcf" />
        <path d="M13 83C11 78 8 76 5 73C4 71 7 70 9 72L12 75L9 66C9 64 11 63 12 66L14 71V63C15 60 17 61 17 63L18 71L20 63C21 61 23 62 23 64L22 73L25 68C27 67 28 69 27 71L23 83Z" fill="#fafafa" strokeWidth="1.200" />
        <path d="M4.500 89.500H20.500V99M15 105.500H4.500V89.500" strokeWidth="1.400" /><circle cx="20" cy="105" r="5" strokeWidth="1.400" /><path d="M24 108L28 112" strokeWidth="3" />
        <path d="M14 119H19L16.500 121.500Z" fill="#ccc" stroke="none" />
        <path d="M15.500 148V133H12.500L16 128L19.500 133H17.500V148Z" strokeWidth="1.200" /><path d="M11 137C2 139 3 144 12 145M21 137C30 140 28 144 20 144H8M11 141L7 144L11 147" strokeWidth="1.400" />
        <path d="M14 157H19L16.500 159.500Z" fill="#ccc" stroke="none" />
        <path d="M3 164.500H29" stroke="#cfcfcf" />
        <path d="M4.500 169.500H9.500V175.500H4.500ZM12.500 169.500H17.500V175.500H12.500ZM20.500 169.500H25.500V175.500H20.500ZM4.500 178.500H19.500V191.500H4.500Z" strokeWidth="1.300" /><path d="M9 181V189L16 185Z" fill="#d0d2d4" stroke="none" />
        <circle cx="26" cy="206" r="3.500" fill="#e4e4e4" /><path d="M24 206H28" stroke="#fff" />
      </svg>
    </div>
  );
}

function CommandLine() {
  return (
    <div className="absolute bottom-0 left-[145px] right-[145px] flex h-[27px] rounded-[3px] border border-[#63676f] bg-white">
      <div className="flex w-[57px] shrink-0 items-center bg-[#6b6f78] pl-[3px]">
        <Icon w={6} h={18}><path d="M1 0V18M4.500 0V18" stroke="#e4e4e4" strokeWidth="2" strokeDasharray="2 1" /></Icon>
        <button aria-label="Close command line" className="ml-[7px]"><Icon w={9} h={9}><path d="M.500 .500L8.500 8.500M8.500 .500L.500 8.500" stroke="#e4e4e4" strokeWidth="2" /></Icon></button>
        <button aria-label="Customize" className="ml-[11px]"><Icon><path d="M1.500 14.500L9 7" stroke="#e4e4e4" strokeWidth="3" /><path d="M8 8C6.500 4 9 1 13 1L10.500 4L12 6L16 3.500C16 7 13 10 8 8Z" fill="#e4e4e4" /></Icon></button>
      </div>
      <button aria-label="Recent commands" className="ml-1 flex items-center gap-[2px]">
        <Icon w={16} h={13}><rect x=".500" y=".500" width="15" height="12" stroke="#8a8a8a" /><path d="M0 1.500H16" stroke="#8a8a8a" strokeWidth="2" /><path d="M2.500 5L5 7.500L2.500 10M6 10.500H10" stroke="#777" /></Icon>
        <svg width="8" height="4" viewBox="0 0 8 4" aria-hidden="true"><path d="M0 0H8L4 4Z" fill="#8a8a8a" /></svg>
      </button>
      <input aria-label="Command" placeholder="Type a command" className="min-w-0 flex-1 px-[6px] font-['DejaVu_Sans_Mono','Liberation_Mono',monospace] text-xs italic outline-none placeholder:text-[#999]" />
      <button aria-label="Command history" className="mr-[3px]"><Icon w={8} h={4}><path d="M0 4H8L4 0Z" fill="#8a8a8a" /></Icon></button>
    </div>
  );
}

function Canvas() {
  return (
    <main className="relative flex-1 overflow-hidden bg-white text-black">
      <div className="flex justify-between pl-[3px] pr-[10px] pt-[6px]">
        <button className="whitespace-nowrap">[−][Top][2D Wireframe]</button>
        <div className="flex items-center gap-2 text-[#6a6a6f]">
          <button aria-label="Minimize drawing"><Icon w={12} h={12}><rect x=".500" y="6.500" width="11" height="4" fill="#eee" stroke="#77777c" /></Icon></button>
          <button aria-label="Restore drawing"><Icon w={12} h={12}><path d="M3.500 2.500V.500H11.500V9.500H9.500" fill="#eee" stroke="#66666b" /><rect x=".500" y="2.500" width="9" height="9" fill="#fff" stroke="#66666b" /><rect x="3.500" y="5.500" width="3" height="3" stroke="#55555a" /></Icon></button>
          <button aria-label="Close drawing"><Icon w={12} h={12}><path d="M1 1L11 11M11 1L1 11" stroke="#66666b" strokeWidth="4" /><path d="M1 1L11 11M11 1L1 11" stroke="#eee" strokeWidth="1.500" /></Icon></button>
        </div>
      </div>

      <FloorPlan />

      <svg width="97" height="97" viewBox="0 0 97 97" fill="none" stroke="#000" className="absolute left-[754px] top-80" aria-hidden="true">
        <path d="M0 48.500H45M52 48.500H97M48.500 0V45M48.500 52V97" />
        <rect x="45.500" y="45.500" width="6" height="6" />
      </svg>

      <Compass />
      <button className="absolute right-[59px] top-[193px] flex h-[17px] w-12 items-center justify-center gap-[6px] rounded-[4px] bg-[#ebebf5] text-[11px] text-[#909090]">
        WCS
        <Icon w={9} h={5}><path d="M.500 .500H8.500L4.500 4.500Z" stroke="#b5b5bd" /></Icon>
      </button>
      <NavBar />

      <svg width="74" height="74" viewBox="0 0 74 74" fill="none" stroke="#000" className="absolute bottom-[16px] left-4" role="img" aria-label="UCS icon">
        <path d="M5.500 18V68.500H56" />
        <rect x="1.500" y="63.500" width="9" height="9" />
        <path d="M7 .500L13.500 7L20 .500M13.500 7V14M60 54L73 67M73 54L60 67" strokeWidth="1.200" />
      </svg>

      <CommandLine />
    </main>
  );
}

/* ---------- status bar ---------- */

function Cell({ className, children }) {
  return <div className={clsx("flex h-6 items-center justify-center bg-[#3b4453]", className)}>{children}</div>;
}

const Person = ({ fill = "#d9d9d9" }) => <path d="M7.500 0L10 5V8L14 13V16L9.500 14H5.500L1 16V13L5 8V5Z" fill={fill} />;

function StatusBar() {
  return (
    <footer className="flex h-[31px] shrink-0 items-start border-b-[3px] border-[#1f1f1f] bg-[#222933] text-white">
      <div className="flex h-6 items-center pl-4">
        <button aria-label="Layout menu"><Burger /></button>
        <button className="ml-[9px] h-6 w-[69px] bg-[#3b4453] pt-[2px] font-bold [clip-path:polygon(10px_0,100%_0,calc(100%_-_10px)_100%,0_100%)]">Model</button>
        <button className="ml-[6px] w-[42px] pt-[2px] whitespace-nowrap">Layout1</button>
        <span className="ml-[9px]"><Slash /></span>
        <button className="ml-[7px] w-[43px] pt-[2px] whitespace-nowrap">Layout2</button>
        <span className="ml-[9px]"><Slash /></span>
        <button aria-label="New layout" className="ml-[9px]"><Plus /></button>
        <span className="ml-[10px]"><Slash /></span>
      </div>
      <div className="ml-auto flex gap-[3px] pr-[2px] pt-[2px]">
        <Cell className="w-[47px]"><button>MODEL</button></Cell>
        <Cell className="w-16 gap-[10px]">
          <button aria-label="Grid"><Icon><path d="M3.500 0V16M7.500 0V16M11.500 0V16M0 4.500H15M0 8.500H15M0 12.500H15" stroke="#d9d9d9" /></Icon></button>
          <button aria-label="Snap" className="flex items-center gap-[9px]"><Icon w={13} h={13}><path d="M1 .500V13M6.500 .500V13M12 .500V13" stroke="#d9d9d9" strokeWidth="2" strokeDasharray="2 3" /></Icon><Caret big /></button>
        </Cell>
        <Cell className="w-[104px] gap-2">
          <button aria-label="Ortho"><Icon><path d="M.500 0V15.500H16M.500 10.500H5.500V15" stroke="#d9d9d9" /></Icon></button>
          <button aria-label="Polar tracking" className="flex items-center gap-2"><Icon><circle cx="6.500" cy="8.500" r="6" stroke="#d9d9d9" strokeWidth="1.300" /><path d="M6 8.500H16M6 8.500L13 2" stroke="#d9d9d9" /></Icon><Caret big /></button>
          <button aria-label="Isodraft" className="flex items-center gap-[10px]"><Icon w={14}><path d="M1 1L14 14" stroke="#e8605a" strokeWidth="1.200" /><path d="M7.500 0V16" stroke="#5fd27a" strokeWidth="1.200" /><circle cx="7.500" cy="7.500" r="1.500" fill="#3b4453" stroke="#fff" /></Icon><Caret big /></button>
        </Cell>
        <div className="-ml-[2px] flex gap-px">
          <Cell className="w-16 gap-2">
            <button aria-label="Object snap tracking"><Icon><path d="M15 1L1 14.500H16" stroke="#d9d9d9" /><path d="M5 6h3v3H5z" fill="#fff" /></Icon></button>
            <button aria-label="Object snap" className="flex items-center gap-2"><Icon><path d="M6 2.500H15.500V15.500H2.500V6" stroke="#d9d9d9" /><rect x=".500" y=".500" width="4" height="4" stroke="#f0a878" /></Icon><Caret big /></button>
          </Cell>
          <Cell className="w-6"><button aria-label="Lineweight display"><Icon><path d="M0 1H9V4H0ZM0 6H9V9H0ZM0 11H9V15H0ZM7 2H16V3H7ZM7 7H16V8H7ZM9 12H16V13H9Z" fill="#d9d9d9" /></Icon></button></Cell>
        </div>
        <div className="flex h-6 w-[106px] items-center gap-[6px] bg-[#3b4453]">
          <button aria-label="Annotation visibility" className="flex h-[22px] w-[23px] shrink-0 items-center justify-center bg-[#5b8bc4]"><Icon><Person fill="#fff" /><circle cx="13" cy="3" r="2.200" stroke="#fff" /></Icon></button>
          <button aria-label="Auto scale"><Icon><Person /><path d="M13 0L10 4H12.500L11 7L16 3H13.500Z" fill="#d9d9d9" /></Icon></button>
          <button aria-label="Annotation scale" className="ml-[2px] flex items-center gap-2"><Icon><Person /></Icon><span className="flex items-center gap-[2px]">1:1 <Caret big /></span></button>
        </div>
        <div className="flex gap-px">
          <Cell className="w-10 gap-[9px]">
            <button aria-label="Workspace switching" className="flex items-center gap-2"><Icon><circle cx="8" cy="8" r="4.200" stroke="#d9d9d9" strokeWidth="3.600" /><circle cx="8" cy="8" r="6.800" stroke="#d9d9d9" strokeWidth="2.400" strokeDasharray="2.800 2.540" /></Icon><Caret big /></button>
          </Cell>
          <Cell className="w-6"><button aria-label="Annotation monitor"><Icon><path d="M0 8H16M8 0V16" stroke="#e0e0e0" strokeWidth="1.600" /></Icon></button></Cell>
        </div>
        <Cell className="w-6"><button aria-label="Isolate objects"><Icon><rect x=".500" y=".500" width="6" height="6" stroke="#d9d9d9" /><circle cx="12.500" cy="6.500" r="3" stroke="#d9d9d9" /><path d="M6.500 10L9.500 15.500H3.500Z" stroke="#d9d9d9" /></Icon></button></Cell>
        <Cell className="w-[57px] gap-[11px]">
          <button aria-label="Plot details"><Icon><path d="M3.500 4V.500H11.500V4M.500 4.500H14.500V10.500H.500ZM3.500 8.500H11.500V14.500H3.500Z" stroke="#d9d9d9" strokeWidth="1.200" /><path d="M11.500 7L16 16H7Z" fill="#f5b88a" /><path d="M11.500 10V15" stroke="#a0522d" /></Icon></button>
          <button aria-label="Trusted drawing"><Icon><path d="M0 0H10L13 3V9H0Z" fill="#2b6fc2" /><path d="M0 9H9V15H0Z" fill="#f5b323" /><path d="M0 5.500H12M5.500 1V9" stroke="#fff" /><path d="M8 12.500L11 15L16 10.500" stroke="#5fd27a" strokeWidth="1.800" /></Icon></button>
        </Cell>
        <div className="flex gap-[2px]">
          <Cell className="w-6"><button aria-label="Clean screen"><Icon><rect x=".500" y="2.500" width="15" height="11" stroke="#d9d9d9" strokeWidth="1.200" /><path d="M10 4H14V8ZM2 8V12H6Z" fill="#d9d9d9" /><path d="M9 7.500L12 5M3 11L6.500 8.500" stroke="#d9d9d9" /></Icon></button></Cell>
          <Cell className="w-6"><button aria-label="Customization"><Icon><path d="M0 2H16M0 8H16M0 14H16" stroke="#e0e0e0" strokeWidth="2" /></Icon></button></Cell>
        </div>
      </div>
    </footer>
  );
}

export default function App() {
  return (
    <div className="flex min-h-screen flex-col bg-[#222933] font-['Open_Sans','Noto_Sans',sans-serif] text-xs text-white">
      <TitleBar />
      <RibbonTabs />
      <Ribbon />
      <FileTabs />
      <div className="h-1 bg-[#3b4453]" />
      <Canvas />
      <div className="h-1 bg-[#3b4453]" />
      <StatusBar />
    </div>
  );
}
